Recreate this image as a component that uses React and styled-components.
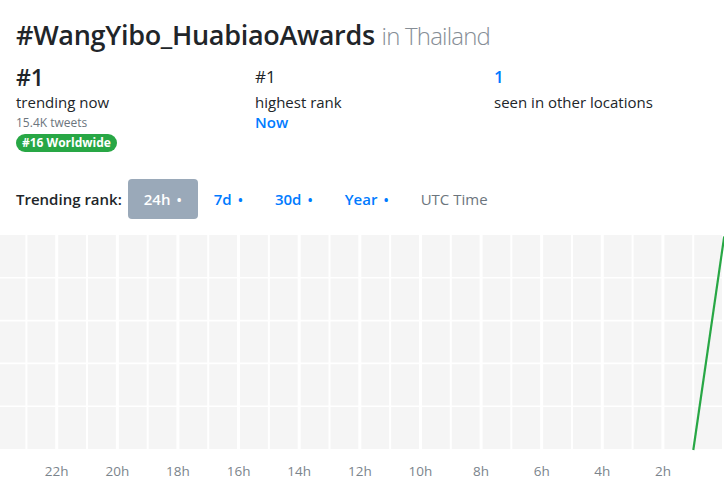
import React from "react";
import styled, { createGlobalStyle } from "styled-components";

const GlobalStyle = createGlobalStyle`
  html, body {
    margin: 0;
    padding: 0;
    background: #fff;
    overflow: hidden;
  }
  body {
    font-family: "Open Sans", "Noto Sans", "Liberation Sans", sans-serif;
    color: #212529;
  }
`;

const stats = [
  { value: "#1", big: true, label: "trending now", sub: "15.4K tweets", badge: "#16 Worldwide" },
  { value: "#1", label: "highest rank", link: "Now" },
  { value: "1", blue: true, label: "seen in other locations" },
];

const ranges = ["24h", "7d", "30d", "Year"];
const hours = ["22h", "20h", "18h", "16h", "14h", "12h", "10h", "8h", "6h", "4h", "2h"];

export default function App() {
  return (
    <>
      <GlobalStyle />
      <Page>
        <Title>
          #WangYibo_HuabiaoAwards <Place>in Thailand</Place>
        </Title>

        <StatsRow>
          {stats.map((s, i) => (
            <Stat key={i}>
              <StatValue $big={s.big} $blue={s.blue}>
                {s.value}
              </StatValue>
              <StatLabel>{s.label}</StatLabel>
              {s.sub && <StatSub>{s.sub}</StatSub>}
              {s.badge && <Badge>{s.badge}</Badge>}
              {s.link && <StatLink>{s.link}</StatLink>}
            </Stat>
          ))}
        </StatsRow>

        <RangeBar>
          <RangeLabel>Trending rank:</RangeLabel>
          {ranges.map((r, i) => (
            <RangeButton key={r} $active={i === 0}>
              {r}
              <Dot>•</Dot>
            </RangeButton>
          ))}
          <Utc>UTC Time</Utc>
        </RangeBar>
      </Page>

      <RankChart />
    </>
  );
}

function RankChart() {
  const step = 30.31;
  const first = 26.4;
  const rowH = 42.8;
  const cols = [];
  for (let k = 0; k < 24; k++) {
    const x = first + k * step;
    cols.push(
      <line
        key={k}
        x1={x}
        x2={x}
        y1={0}
        y2={rowH * 5}
        stroke="#fff"
        strokeWidth={k % 2 === 1 ? 3 : 2}
      />
    );
  }
  const rows = [];
  for (let r = 1; r < 5; r++) {
    rows.push(
      <line key={r} x1={0} x2={724} y1={rowH * r} y2={rowH * r} stroke="#fff" strokeWidth={1.6} />
    );
  }
  return (
    <ChartWrap>
      <svg width="724" height="250" viewBox="0 0 724 250">
        <rect x="0" y="0" width="724" height={rowH * 5} fill="#f5f5f5" />
        {cols}
        {rows}
        <line x1="693.3" y1={rowH * 5 + 1} x2="724.2" y2="1.5" stroke="#28a745" strokeWidth="2.2" />
        {hours.map((h, i) => (
          <text
            key={h}
            x={first + step + i * step * 2}
            y={241}
            textAnchor="middle"
            fontSize="13.5"
            fill="#7b848c"
            fontFamily="Open Sans, Noto Sans, sans-serif"
          >
            {h}
          </text>
        ))}
      </svg>
    </ChartWrap>
  );
}

const Page = styled.div`
  padding: 0 16px;
`;

const Title = styled.h1`
  margin: 0;
  padding-top: 17px;
  font-size: 27px;
  font-weight: 600;
  letter-spacing: -0.3px;
  line-height: 36px;
  color: #212529;
  white-space: nowrap;
`;

const Place = styled.span`
  color: #868e96;
  font-size: 24px;
  font-weight: 300;
  letter-spacing: -0.8px;
`;

const StatsRow = styled.div`
  display: grid;
  grid-template-columns: 239px 239px 1fr;
  margin-top: 9px;
`;

const Stat = styled.div`
  display: flex;
  flex-direction: column;
  align-items: flex-start;
`;

const StatValue = styled.div`
  font-size: ${(p) => (p.$big ? "23px" : "17px")};
  font-weight: ${(p) => (p.$big || p.$blue ? 600 : 500)};
  line-height: 28px;
  height: 28px;
  display: flex;
  align-items: ${(p) => (p.$big ? "center" : "flex-end")};
  color: ${(p) => (p.$blue ? "#007bff" : "#212529")};
`;

const StatLabel = styled.div`
  font-size: 15px;
  line-height: 22px;
`;

const StatSub = styled.div`
  font-size: 12px;
  line-height: 20px;
  color: #6c757d;
`;

const StatLink = styled.div`
  font-size: 15px;
  font-weight: 600;
  line-height: 18px;
  color: #007bff;
`;

const Badge = styled.span`
  margin-top: 1px;
  display: inline-block;
  background: #28a745;
  color: #fff;
  font-size: 12px;
  font-weight: 700;
  line-height: 18px;
  padding: 0 6px;
  border-radius: 9px;
`;

const RangeBar = styled.div`
  display: flex;
  align-items: center;
  margin-top: 27px;
  height: 40px;
`;

const RangeLabel = styled.span`
  font-size: 15px;
  font-weight: 600;
  margin-right: 6px;
`;

const RangeButton = styled.span`
  display: inline-flex;
  align-items: center;
  height: 40px;
  padding: 0 16px;
  border-radius: 4px;
  font-size: 15px;
  font-weight: 600;
  color: ${(p) => (p.$active ? "#fff" : "#007bff")};
  background: ${(p) => (p.$active ? "#9aa9b9" : "transparent")};
`;

const Dot = styled.span`
  margin-left: 6px;
  font-size: 14px;
`;

const Utc = styled.span`
  font-size: 15px;
  color: #6c757d;
  padding: 0 16px;
`;

const ChartWrap = styled.div`
  margin-top: 16px;
  line-height: 0;
`;
